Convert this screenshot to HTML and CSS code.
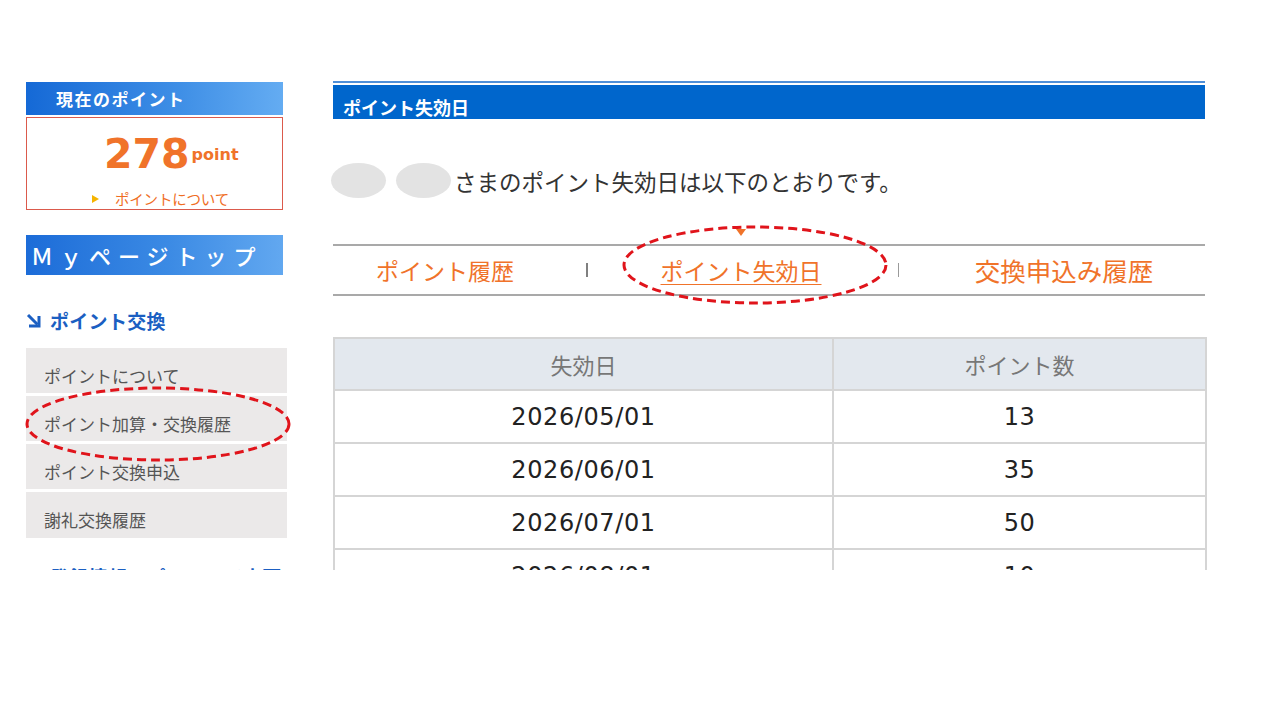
FILE: index.html
```html
<!DOCTYPE html>
<html lang="ja">
<head>
<meta charset="utf-8">
<title>ポイント失効日</title>
<link rel="stylesheet" href="styles.css">
</head>
<body>
<div class="shot">
  <aside class="side">
    <div class="cur-head">現在のポイント</div>
    <div class="cur-box">
      <div class="pts"><span class="num">278</span><span class="unit">point</span></div>
      <div class="about"><span class="tri"></span>ポイントについて</div>
    </div>
    <div class="mytop">Ｍｙページトップ</div>
    <div class="sec-head">
      <svg class="sec-icon" viewBox="0 0 15 15" width="15" height="15"><path d="M2 2 L11.5 11.5" /><path d="M13 3 V13 H3" /></svg>
      <span>ポイント交換</span>
    </div>
    <ul class="menu">
      <li>ポイントについて</li>
      <li>ポイント加算・交換履歴</li>
      <li>ポイント交換申込</li>
      <li>謝礼交換履歴</li>
    </ul>
    <div class="sec-head sec-next">
      <svg class="sec-icon" viewBox="0 0 15 15" width="15" height="15"><path d="M2 2 L11.5 11.5" /><path d="M13 3 V13 H3" /></svg>
      <span>登録情報・パスワード変更</span>
    </div>
  </aside>

  <main class="main">
    <div class="title-bar"><h1>ポイント失効日</h1></div>
    <p class="lead"><span class="blur"></span><span class="blur blur2"></span><span class="lead-text">さまのポイント失効日は以下のとおりです。</span></p>
    <nav class="tabs">
      <a class="tab tab1">ポイント履歴</a>
      <span class="sep"><i></i></span>
      <a class="tab tab2 current">ポイント失効日</a>
      <span class="sep sep2"><i></i></span>
      <a class="tab tab3">交換申込み履歴</a>
    </nav>
    <table class="expire">
      <thead>
        <tr><th class="c1">失効日</th><th class="c2">ポイント数</th></tr>
      </thead>
      <tbody>
        <tr><td>2026/05/01</td><td>13</td></tr>
        <tr><td>2026/06/01</td><td>35</td></tr>
        <tr><td>2026/07/01</td><td>50</td></tr>
        <tr><td>2026/08/01</td><td>10</td></tr>
      </tbody>
    </table>
  </main>

  <svg class="mark mark-side" viewBox="0 0 266 76"><ellipse cx="133" cy="38" rx="131" ry="36" /></svg>
  <svg class="mark mark-tab" viewBox="0 0 266 80"><ellipse cx="133" cy="40" rx="131" ry="38" /></svg>
</div>
</body>
</html>
```

FILE: styles.css
```css
* { box-sizing: border-box; }

html, body {
  margin: 0;
  padding: 0;
  background: #ffffff;
}

body {
  font-family: "Noto Sans CJK JP", "Noto Sans", sans-serif;
  color: #333;
}

.shot {
  position: relative;
  width: 1280px;
  height: 570px;
  overflow: hidden;
  padding: 81px 0 0 26px;
  display: flex;
  align-items: flex-start;
  gap: 46px;
}

/* ---------- left column ---------- */
.side {
  width: 261px;
  flex: none;
}

.cur-head {
  width: 257px;
  height: 33px;
  margin-top: 1px;
  background: linear-gradient(90deg, #1569d6 0%, #3f8fe6 60%, #64acf2 100%);
  color: #fff;
  font-weight: 700;
  font-size: 17px;
  letter-spacing: 1.5px;
  line-height: 33px;
  padding-left: 30px;
  white-space: nowrap;
}

.cur-box {
  width: 257px;
  height: 93px;
  margin-top: 2px;
  border: 1px solid #db5a4c;
  padding-top: 12px;
}

.pts {
  padding-left: 77px;
  height: 48px;
  line-height: 48px;
  white-space: nowrap;
}

.num {
  font-family: "DejaVu Sans", Verdana, sans-serif;
  font-weight: 700;
  font-size: 41px;
  color: #f0732a;
}

.unit {
  font-family: "DejaVu Sans", Verdana, sans-serif;
  font-weight: 700;
  font-size: 16px;
  color: #f0732a;
  vertical-align: 8px;
  margin-left: 2px;
}

.about {
  margin-top: 11px;
  padding-left: 65px;
  font-size: 14.5px;
  line-height: 20px;
  color: #ef6d23;
  display: flex;
  align-items: center;
  letter-spacing: -0.2px;
  white-space: nowrap;
}

.tri {
  width: 0;
  height: 0;
  border-left: 7px solid #f5b400;
  border-top: 4px solid transparent;
  border-bottom: 4px solid transparent;
  margin-right: 16px;
}

.mytop {
  width: 257px;
  height: 40px;
  margin-top: 25px;
  background: linear-gradient(90deg, #1c6cd8 0%, #3b8ae4 55%, #62a8f0 100%);
  color: #fff;
  font-size: 22px;
  font-weight: 500;
  letter-spacing: 7px;
  line-height: 40px;
  padding-left: 5px;
  white-space: nowrap;
  overflow: hidden;
}

.sec-head {
  margin-top: 32px;
  height: 26px;
  display: flex;
  align-items: center;
  color: #1b5fc2;
  font-size: 19px;
  font-weight: 700;
  letter-spacing: 0.3px;
  white-space: nowrap;
}

.sec-icon {
  width: 15px;
  height: 15px;
  margin-right: 9px;
  fill: none;
  stroke: #1b5fc2;
  stroke-width: 3;
}

.menu {
  list-style: none;
  margin: 15px 0 0 0;
  padding: 0;
}

.menu li {
  height: 45px;
  margin-bottom: 3px;
  background: #ebe9e9;
  color: #555;
  font-size: 17px;
  line-height: 24px;
  padding: 16px 0 0 18px;
  white-space: nowrap;
}

.menu li:last-child {
  height: 46px;
}

.sec-next {
  margin-top: 25px;
}

/* ---------- main column ---------- */
.main {
  width: 872px;
  flex: none;
}

.title-bar {
  border-top: 2px solid #4f8fd8;
  padding-top: 2px;
}

.title-bar h1 {
  margin: 0;
  height: 34px;
  background: #0066cc;
  color: #fff;
  font-size: 18px;
  font-weight: 700;
  line-height: 24px;
  padding: 10px 0 0 10px;
  white-space: nowrap;
}

.lead {
  margin: 44px 0 0 -2px;
  height: 35px;
  display: flex;
  align-items: center;
}

.blur {
  width: 55px;
  height: 35px;
  border-radius: 50%;
  background: #e3e3e3;
}

.blur2 {
  margin-left: 10px;
}

.lead-text {
  margin-left: 3px;
  font-size: 22.5px;
  color: #333;
  white-space: nowrap;
}

.tabs {
  margin-top: 46px;
  height: 52px;
  border-top: 2px solid #a9a9a9;
  border-bottom: 2px solid #a9a9a9;
  display: grid;
  grid-template-columns: 224px 60px 248px 66px 266px;
  align-items: center;
}

.tab {
  text-align: center;
  color: #f0732a;
  font-size: 23px;
  line-height: 30px;
  white-space: nowrap;
}

.tab3 {
  font-size: 25.5px;
}

.tab.current {
  position: relative;
  text-decoration: underline;
  text-underline-offset: 4px;
  text-decoration-thickness: 1px;
}

.tab.current::before {
  content: "";
  position: absolute;
  left: 50%;
  top: -26px;
  margin-left: -5px;
  border-top: 7px solid #f0732a;
  border-left: 5px solid transparent;
  border-right: 5px solid transparent;
}

.sep {
  display: flex;
  justify-content: center;
}

.sep i {
  display: block;
  width: 2px;
  height: 14px;
  background: #808080;
}

.sep2 i {
  width: 1px;
  background: #9a9a9a;
}

.expire {
  margin-top: 41px;
  width: 872px;
  border-collapse: collapse;
  table-layout: fixed;
}

.expire th,
.expire td {
  border: 2px solid #d5d5d5;
  text-align: center;
  padding: 0;
}

.expire th {
  height: 52px;
  background: #e3e8ee;
  color: #777;
  font-weight: 400;
  font-size: 22px;
}

.expire .c1 { width: 499px; }
.expire .c2 { width: 373px; }

.expire td {
  height: 53px;
  font-family: "DejaVu Sans", Verdana, sans-serif;
  font-size: 24px;
  letter-spacing: 0.6px;
  color: #222;
}

/* ---------- annotation overlays ---------- */
.mark {
  position: absolute;
  fill: none;
  stroke: #e0141b;
  stroke-width: 3;
  stroke-dasharray: 9 5;
  overflow: visible;
}

.mark-side {
  left: 25px;
  top: 386px;
  width: 266px;
  height: 76px;
}

.mark-tab {
  left: 622px;
  top: 225px;
  width: 266px;
  height: 80px;
}
```
